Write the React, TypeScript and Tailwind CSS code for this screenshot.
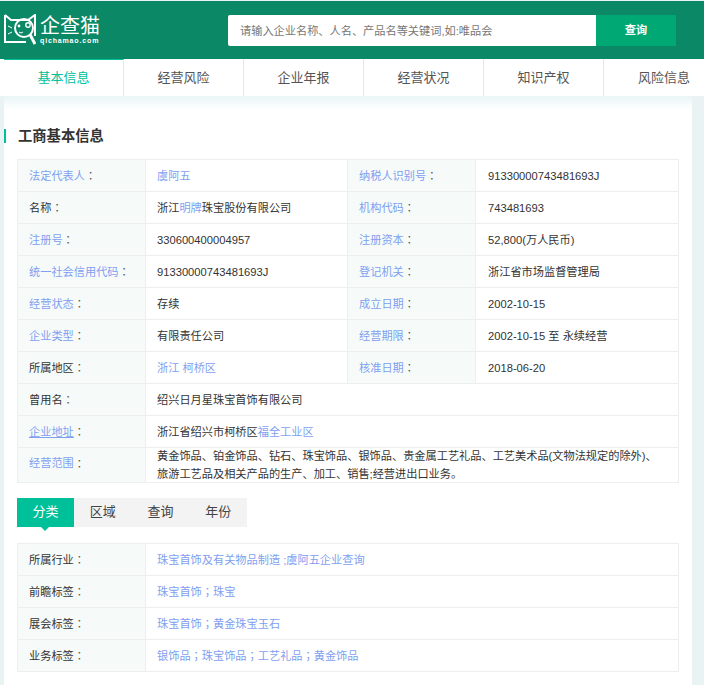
import type { ReactNode } from 'react'

const NAV_ITEMS = ['基本信息', '经营风险', '企业年报', '经营状况', '知识产权', '风险信息']
const SUB_TABS = ['分类', '区域', '查询', '年份']

const Blue = ({ children }: { children: ReactNode }) => <span className="text-[#7f9ff0]">{children}</span>

// the centered full-width punctuation only exists in the TC cut
const Punct = ({ children }: { children: ReactNode }) => (
  <span className="font-['Noto_Sans_CJK_TC',sans-serif]">{children}</span>
)

function Logo() {
  return (
    <div className="flex items-center gap-1 w-[96px] shrink-0">
      <svg width="32" height="32" viewBox="0 0 32 32" fill="none" stroke="#fff" strokeWidth="2" className="shrink-0">
        <path d="M1 1 L7 6 H24 L31 1 V22" />
        <path d="M1 1 V28 H22" />
        <circle cx="20" cy="14" r="9" />
        <path d="M26 20.5 L31 30" strokeWidth="3" />
        <circle cx="24" cy="11" r="2.2" strokeWidth="1.4" />
        <circle cx="15" cy="12" r="1.4" fill="#fff" stroke="none" />
        <path d="M15 18 q2 2 4 0" strokeWidth="1" />
        <path d="M4 12 L8 14 M4 20 L8 18" strokeWidth="1" />
      </svg>
      <div className="flex flex-col text-white">
        <span className="text-[20px] leading-[21px] whitespace-nowrap">企查猫</span>
        <span className="text-[7px] leading-[8px] font-bold tracking-[0.85px] whitespace-nowrap">qichamao.com</span>
      </div>
    </div>
  )
}

function Header() {
  return (
    <header className="mt-px h-[58px] bg-[#0b8866] flex items-center pl-1 shrink-0">
      <Logo />
      <div className="ml-[128px] flex h-[31px] w-[448px]">
        <div className="flex-1 bg-white rounded-l-[2px] pl-3 text-[11.2px] leading-[32px] text-[#777]">
          请输入企业名称、人名、产品名等关键词,如:唯品会
        </div>
        <button className="w-[80px] bg-[#00a874] text-white text-[11.2px] font-bold">查询</button>
      </div>
    </header>
  )
}

function Nav() {
  return (
    <nav className="flex h-[37px] bg-white pl-1 shrink-0 overflow-hidden">
      {NAV_ITEMS.map((item, i) => (
        <div
          key={item}
          className={
            i === 0
              ? 'w-[120px] shrink-0 border-t border-r border-t-[#00c09a] border-r-[#e8e8e8] text-[#00c09a] text-[13px] text-center leading-[36px]'
              : i === 5
                ? 'w-[120px] shrink-0 text-[#555] text-[13px] text-center leading-[37px]'
                : 'w-[120px] shrink-0 border-r border-[#e8e8e8] text-[#555] text-[13px] text-center leading-[37px]'
          }
        >
          {item}
        </div>
      ))}
    </nav>
  )
}

function Label({ children, link, under, raised }: { children: ReactNode; link?: boolean; under?: boolean; raised?: boolean }) {
  return (
    <div
      className={`w-[128px] bg-[#f6fbfa] flex items-center pl-[11px] border-r border-[#eeeeee] shrink-0 ${raised ? 'pb-[3px]' : 'pt-px'} ${link ? 'text-[#7f9ff0]' : 'text-[#333]'}`}
    >
      <span className={under ? 'underline' : ''}>{children}</span>
      <span className="text-[#555]"><Punct>：</Punct></span>
    </div>
  )
}

function Value({ children, right }: { children: ReactNode; right?: boolean }) {
  return <div className={`flex-1 flex items-center pt-px text-[#333] ${right ? 'pl-3' : 'pl-[11px]'}`}>{children}</div>
}

type Pair = { label: string; link?: boolean; value: ReactNode }

const ROWS: [Pair, Pair][] = [
  [
    { label: '法定代表人', link: true, value: <Blue>虞阿五</Blue> },
    { label: '纳税人识别号', link: true, value: '91330000743481693J' },
  ],
  [
    { label: '名称', value: <span>浙江<Blue>明牌</Blue>珠宝股份有限公司</span> },
    { label: '机构代码', link: true, value: '743481693' },
  ],
  [
    { label: '注册号', link: true, value: '330600400004957' },
    { label: '注册资本', link: true, value: '52,800(万人民币)' },
  ],
  [
    { label: '统一社会信用代码', link: true, value: '91330000743481693J' },
    { label: '登记机关', link: true, value: '浙江省市场监督管理局' },
  ],
  [
    { label: '经营状态', link: true, value: '存续' },
    { label: '成立日期', link: true, value: '2002-10-15' },
  ],
  [
    { label: '企业类型', link: true, value: '有限责任公司' },
    { label: '经营期限', link: true, value: '2002-10-15 至 永续经营' },
  ],
  [
    { label: '所属地区', value: <Blue>浙江 柯桥区</Blue> },
    { label: '核准日期', link: true, value: '2018-06-20' },
  ],
]

function InfoTable() {
  return (
    <div className="ml-[13px] w-[662px] border border-[#eeeeee] text-[11.2px]">
      {ROWS.map(([a, b]) => (
        <div key={a.label} className="flex h-[32px] border-b border-[#eeeeee]">
          <Label link={a.link}>{a.label}</Label>
          <div className="w-[202px] shrink-0 flex items-center pt-px pl-[11px] text-[#333] border-r border-[#eeeeee]">{a.value}</div>
          <Label link={b.link}>{b.label}</Label>
          <Value right>{b.value}</Value>
        </div>
      ))}
      <div className="flex h-[32px] border-b border-[#eeeeee]">
        <Label>曾用名</Label>
        <Value>绍兴日月星珠宝首饰有限公司</Value>
      </div>
      <div className="flex h-[32px] border-b border-[#eeeeee]">
        <Label link under>企业地址</Label>
        <Value><span>浙江省绍兴市柯桥区<Blue>福全工业区</Blue></span></Value>
      </div>
      <div className="flex h-[34px]">
        <Label link raised>经营范围</Label>
        <div className="flex-1 pl-[11px] text-[#333] leading-[17.5px]">
          黄金饰品、铂金饰品、钻石、珠宝饰品、银饰品、贵金属工艺礼品、工艺美术品(文物法规定的除外)、
          <br />
          旅游工艺品及相关产品的生产、加工、销售;经营进出口业务。
        </div>
      </div>
    </div>
  )
}

function SubTabs() {
  return (
    <div className="ml-[13px] mt-[15px] flex w-[230px] h-[29px] bg-[#f3f3f3] text-[13px]">
      {SUB_TABS.map((tab, i) => (
        <div
          key={tab}
          className={
            i === 0
              ? 'relative w-[57px] text-center leading-[28px] bg-[#00c09a] text-white'
              : 'flex-1 text-center leading-[28px] text-[#444]'
          }
        >
          {tab}
          {i === 0 && (
            <span className="absolute left-[24px] top-[29px] border-x-[4px] border-t-[4px] border-x-transparent border-t-[#00c09a]" />
          )}
        </div>
      ))}
    </div>
  )
}

const TAG_ROWS: { label: string; value: ReactNode }[] = [
  { label: '所属行业', value: '珠宝首饰及有关物品制造 ;虞阿五企业查询' },
  { label: '前瞻标签', value: <>珠宝首饰<Punct>；</Punct>珠宝</> },
  { label: '展会标签', value: <>珠宝首饰<Punct>；</Punct>黄金珠宝玉石</> },
  { label: '业务标签', value: <>银饰品<Punct>；</Punct>珠宝饰品<Punct>；</Punct>工艺礼品<Punct>；</Punct>黄金饰品</> },
]

function TagTable() {
  return (
    <div className="ml-[13px] mt-[16px] w-[662px] border border-[#eeeeee] border-b-0 text-[11.2px]">
      {TAG_ROWS.map((row) => (
        <div key={row.label} className="flex h-[32px] border-b border-[#eeeeee]">
          <Label>{row.label}</Label>
          <Value><Blue>{row.value}</Blue></Value>
        </div>
      ))}
    </div>
  )
}

export default function App() {
  return (
    <div className="font-['Liberation_Sans','Noto_Sans_CJK_SC',sans-serif] h-[685px] w-[704px] overflow-hidden bg-[#eaf3f4] flex flex-col">
      <Header />
      <Nav />
      <main className="ml-1 w-[688px] flex-1 bg-white">
        <div className="h-[14px] bg-gradient-to-b from-[#eaf6f5] to-white" />
        <h2 className="mt-[19px] h-[14px] border-l-2 border-[#00c09a] pl-3 text-[14.3px] leading-[14px] font-bold text-[#333]">
          工商基本信息
        </h2>
        <div className="h-[16px]" />
        <InfoTable />
        <SubTabs />
        <TagTable />
      </main>
    </div>
  )
}
